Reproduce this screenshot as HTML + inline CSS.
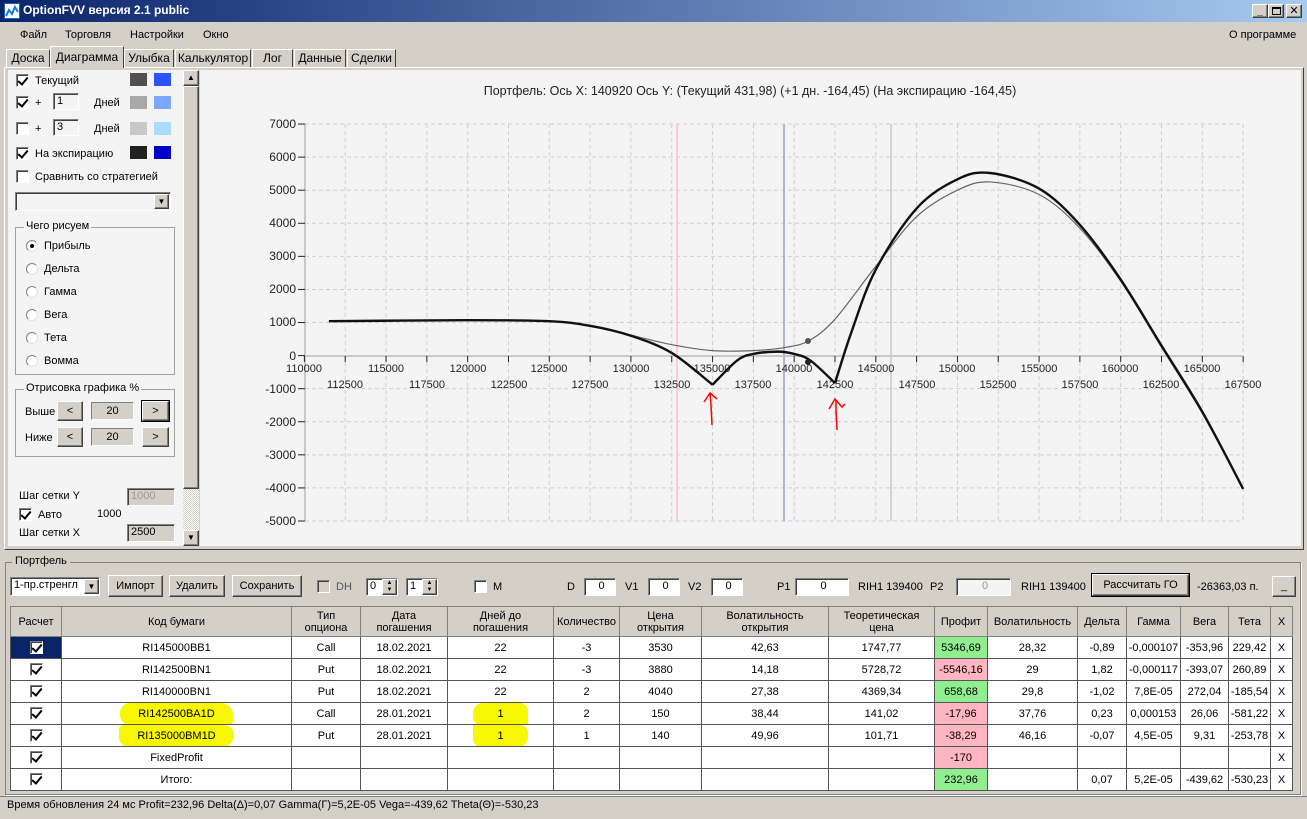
<!DOCTYPE html>
<html><head><meta charset="utf-8"><style>
*{box-sizing:border-box;margin:0;padding:0}
body{width:1307px;height:819px;overflow:hidden;background:#d4d0c8;font:11px "Liberation Sans","DejaVu Sans",sans-serif;color:#000;position:relative}
.a{position:absolute}
.cb{position:absolute;width:13px;height:13px;background:#fff;border:1px solid #808080;border-right-color:#fff;border-bottom-color:#fff;box-shadow:inset 1px 1px 0 #404040}
.cb.c::after{content:"";position:absolute;left:3px;top:0px;width:4px;height:8px;border:solid #000;border-width:0 2px 2px 0;transform:rotate(40deg)}
.cb.d{background:#d4d0c8}
.sw{position:absolute;width:17px;height:13px}
.inp{position:absolute;background:#f4f4f4;border:1px solid #808080;border-right-color:#fff;border-bottom-color:#fff;box-shadow:inset 1px 1px 0 #404040;padding-left:3px;line-height:14px}
.btn{position:absolute;background:#d4d0c8;border:1px solid #fff;border-right-color:#404040;border-bottom-color:#404040;box-shadow:inset -1px -1px 0 #808080;text-align:center}
.rd{position:absolute;width:12px;height:12px;border-radius:50%;background:#fff;border:1px solid #808080;border-right-color:#e0e0e0;border-bottom-color:#e0e0e0}
.gb{position:absolute;border:1px solid #a0a0a0}
.gl{position:absolute;background:#f4f4f4;padding:0 2px}
.tab{position:absolute;top:49px;height:18px;border:1px solid #fff;border-right-color:#404040;border-bottom:none;background:#d4d0c8;text-align:center;line-height:16px;font-size:12px}
table{border-collapse:collapse;table-layout:fixed;position:absolute;left:10px;top:606px;width:1282px;background:#fff;font-size:11px;font-family:"Liberation Sans Narrow","Liberation Sans",sans-serif}
td{border:1px solid #555;text-align:center;height:22px;padding:0;white-space:nowrap;overflow:hidden}
tr.h td{background:#d4d0c8;height:30px;line-height:12px;border-color:#808080}
td .cb{position:relative;display:inline-block;vertical-align:middle}
.g{background:#90ee90}.r{background:#ffb6c1}
</style></head><body>
<div class="a" style="left:0;top:0;width:1307px;height:22px;background:linear-gradient(90deg,#0a246a,#a6caf0)"></div>
<div class="a" style="left:4px;top:3px;width:16px;height:16px;background:#fff;border:1px solid #2060c0"><svg width="14" height="14"><path d="M1 12 L4 6 L7 10 L10 3 L13 8" stroke="#1a7ad8" stroke-width="2" fill="none"/></svg></div>
<div class="a" style="left:23px;top:3px;color:#fff;font-weight:bold;font-size:12px">OptionFVV версия 2.1 public</div>
<div class="btn" style="left:1252px;top:4px;width:16px;height:14px;font-size:10px;line-height:14px;font-weight:bold">_</div>
<div class="btn" style="left:1268px;top:4px;width:16px;height:14px"><div class="a" style="left:3px;top:2px;width:9px;height:8px;border:1px solid #000;border-top-width:2px"></div></div>
<div class="btn" style="left:1286px;top:4px;width:16px;height:14px;font-size:11px;line-height:12px;font-weight:bold">✕</div>
<div class="a" style="left:0;top:22px;width:1307px;height:24px;background:#d4d0c8"></div>
<div class="a" style="left:20px;top:29px">Файл</div>
<div class="a" style="left:65px;top:29px">Торговля</div>
<div class="a" style="left:130px;top:29px">Настройки</div>
<div class="a" style="left:203px;top:29px">Окно</div>
<div class="a" style="left:1229px;top:29px">О программе</div>
<div class="tab" style="left:6px;width:44px">Доска</div>
<div class="tab" style="left:50px;top:46px;height:22px;width:74px;line-height:20px;background:#d4d0c8;z-index:2">Диаграмма</div>
<div class="tab" style="left:124px;width:50px">Улыбка</div>
<div class="tab" style="left:175px;width:76px">Калькулятор</div>
<div class="tab" style="left:252px;width:41px">Лог</div>
<div class="tab" style="left:294px;width:52px">Данные</div>
<div class="tab" style="left:347px;width:49px">Сделки</div>
<div class="a" style="left:4px;top:67px;width:1300px;height:483px;border:1px solid #fff;border-right-color:#404040;border-bottom-color:#404040;background:#d4d0c8"></div>
<div class="a" style="left:8px;top:70px;width:175px;height:476px;background:#f4f4f4"></div>
<div class="cb c" style="left:16px;top:74px"></div><div class="a" style="left:35px;top:75px">Текущий</div>
<div class="sw" style="left:130px;top:73px;background:#505050"></div><div class="sw" style="left:154px;top:73px;background:#2b54ff"></div>
<div class="cb c" style="left:16px;top:96px"></div><div class="a" style="left:35px;top:97px">+</div><div class="inp" style="left:53px;top:93px;width:26px;height:17px">1</div><div class="a" style="left:94px;top:97px">Дней</div>
<div class="sw" style="left:130px;top:96px;background:#a8a8a8"></div><div class="sw" style="left:154px;top:96px;background:#7ba7ff"></div>
<div class="cb" style="left:16px;top:122px"></div><div class="a" style="left:35px;top:123px">+</div><div class="inp" style="left:53px;top:119px;width:26px;height:17px">3</div><div class="a" style="left:94px;top:123px">Дней</div>
<div class="sw" style="left:130px;top:122px;background:#c8c8c8"></div><div class="sw" style="left:154px;top:122px;background:#aadcff"></div>
<div class="cb c" style="left:16px;top:147px"></div><div class="a" style="left:35px;top:148px">На экспирацию</div>
<div class="sw" style="left:130px;top:146px;background:#202020"></div><div class="sw" style="left:154px;top:146px;background:#0000c8"></div>
<div class="cb" style="left:16px;top:170px"></div><div class="a" style="left:35px;top:171px">Сравнить со стратегией</div>
<div class="inp" style="left:15px;top:192px;width:156px;height:19px"></div><div class="btn" style="left:154px;top:194px;width:15px;height:15px;font-size:8px;line-height:13px">▼</div>
<div class="gb" style="left:15px;top:227px;width:160px;height:148px"></div><div class="gl" style="left:24px;top:220px">Чего рисуем</div>
<div class="rd" style="left:26px;top:240px"><div class="a" style="left:3px;top:3px;width:4px;height:4px;background:#000;border-radius:50%"></div></div><div class="a" style="left:44px;top:240px">Прибыль</div>
<div class="rd" style="left:26px;top:263px"></div><div class="a" style="left:44px;top:263px">Дельта</div>
<div class="rd" style="left:26px;top:286px"></div><div class="a" style="left:44px;top:286px">Гамма</div>
<div class="rd" style="left:26px;top:309px"></div><div class="a" style="left:44px;top:309px">Вега</div>
<div class="rd" style="left:26px;top:332px"></div><div class="a" style="left:44px;top:332px">Тета</div>
<div class="rd" style="left:26px;top:355px"></div><div class="a" style="left:44px;top:355px">Вомма</div>
<div class="gb" style="left:15px;top:389px;width:160px;height:68px"></div><div class="gl" style="left:24px;top:382px">Отрисовка графика %</div>
<div class="a" style="left:25px;top:406px">Выше</div><div class="btn" style="left:57px;top:401px;width:26px;height:20px;line-height:18px">&lt;</div><div class="a" style="left:91px;top:402px;width:43px;height:18px;border:1px solid #808080;border-right-color:#fff;border-bottom-color:#fff;background:#d4d0c8;text-align:center;line-height:16px">20</div><div class="btn" style="left:142px;top:401px;width:27px;height:20px;line-height:18px;outline:1px solid #000">&gt;</div>
<div class="a" style="left:25px;top:432px">Ниже</div><div class="btn" style="left:57px;top:427px;width:26px;height:20px;line-height:18px">&lt;</div><div class="a" style="left:91px;top:428px;width:43px;height:18px;border:1px solid #808080;border-right-color:#fff;border-bottom-color:#fff;background:#d4d0c8;text-align:center;line-height:16px">20</div><div class="btn" style="left:142px;top:427px;width:27px;height:20px;line-height:18px">&gt;</div>
<div class="a" style="left:19px;top:490px">Шаг сетки Y</div><div class="inp" style="left:127px;top:488px;width:48px;height:18px;background:#d4d0c8;color:#999">1000</div>
<div class="cb c" style="left:19px;top:508px"></div><div class="a" style="left:38px;top:509px">Авто</div><div class="a" style="left:97px;top:508px">1000</div>
<div class="a" style="left:19px;top:527px">Шаг сетки X</div><div class="inp" style="left:127px;top:524px;width:48px;height:18px;background:#d4d0c8">2500</div>
<div class="a" style="left:183px;top:70px;width:16px;height:476px;background:repeating-conic-gradient(#d4d0c8 0 25%,#fff 0 50%) 0 0/2px 2px"></div>
<div class="btn" style="left:183px;top:70px;width:16px;height:16px;font-size:8px;line-height:14px">▲</div>
<div class="btn" style="left:183px;top:86px;width:16px;height:403px"></div>
<div class="btn" style="left:183px;top:530px;width:16px;height:16px;font-size:8px;line-height:14px">▼</div>
<svg class="a" style="left:200px;top:70px" width="1101" height="476" viewBox="200 70 1101 476" font-family="Liberation Sans,sans-serif" font-size="12">
<rect x="200" y="70" width="1101" height="476" fill="#f4f4f4"/>
<text x="750" y="95" text-anchor="middle" font-size="12.5" fill="#222">Портфель: Ось X: 140920 Ось Y:  (Текущий 431,98)  (+1 дн. -164,45)  (На экспирацию -164,45)</text>
<g id="grid" stroke="#d0d0d0" stroke-dasharray="4 3" stroke-width="1"></g>
<line x1="677" y1="124" x2="677" y2="521" stroke="#ffc0c8" stroke-width="1.5"/>
<line x1="784" y1="124" x2="784" y2="521" stroke="#9aa4b8" stroke-width="1.5"/>
<line x1="891" y1="124" x2="891" y2="521" stroke="#c8c8c8" stroke-width="1.5"/>
<line x1="305" y1="124" x2="305" y2="521" stroke="#c8c8c8" stroke-width="2"/>
<line x1="305" y1="356" x2="1242" y2="356" stroke="#c8c8c8" stroke-width="2"/>
<g id="ticks" stroke="#222"></g>
<g text-anchor="end" fill="#222">
<text x="296" y="128">7000</text><text x="296" y="161">6000</text><text x="296" y="194">5000</text><text x="296" y="227">4000</text><text x="296" y="260">3000</text><text x="296" y="293">2000</text><text x="296" y="326">1000</text><text x="296" y="360">0</text><text x="296" y="393">-1000</text><text x="296" y="426">-2000</text><text x="296" y="459">-3000</text><text x="296" y="492">-4000</text><text x="296" y="525">-5000</text>
</g>
<g text-anchor="middle" font-size="11" fill="#222">
<text x="304" y="372">110000</text><text x="386" y="372">115000</text><text x="468" y="372">120000</text><text x="549" y="372">125000</text><text x="631" y="372">130000</text><text x="712" y="372">135000</text><text x="794" y="372">140000</text><text x="876" y="372">145000</text><text x="957" y="372">150000</text><text x="1039" y="372">155000</text><text x="1120" y="372">160000</text><text x="1202" y="372">165000</text>
<text x="345" y="388">112500</text><text x="427" y="388">117500</text><text x="509" y="388">122500</text><text x="590" y="388">127500</text><text x="672" y="388">132500</text><text x="753" y="388">137500</text><text x="835" y="388">142500</text><text x="917" y="388">147500</text><text x="998" y="388">152500</text><text x="1080" y="388">157500</text><text x="1161" y="388">162500</text><text x="1243" y="388">167500</text>
</g>
<path id="thin" fill="none" stroke="#666" stroke-width="1.2"/>
<path id="thick" fill="none" stroke="#111" stroke-width="2.4"/>
<circle cx="808" cy="341" r="3" fill="#555"/><circle cx="808" cy="362" r="3" fill="#222"/>
<path d="M712 425 L711 405 L710 393 M704 402 L710 393 L717 399" fill="none" stroke="#f00" stroke-width="1.5"/>
<path d="M837 430 L836 410 L836 400 M829 409 L835 399 L842 407 L845 404" fill="none" stroke="#f00" stroke-width="1.5"/>
</svg>
<div class="gb" style="left:5px;top:562px;width:1296px;height:233px;border-color:#808080;box-shadow:1px 1px 0 #fff"></div>
<div class="a" style="left:12px;top:555px;background:#d4d0c8;padding:0 3px">Портфель</div>
<div class="inp" style="left:10px;top:577px;width:90px;height:19px;background:#fff">1-пр.стренгл</div><div class="btn" style="left:84px;top:579px;width:15px;height:15px;font-size:8px;line-height:13px">▼</div>
<div class="btn" style="left:108px;top:575px;width:55px;height:22px;line-height:20px">Импорт</div>
<div class="btn" style="left:169px;top:575px;width:56px;height:22px;line-height:20px">Удалить</div>
<div class="btn" style="left:232px;top:575px;width:70px;height:22px;line-height:20px">Сохранить</div>
<div class="cb d" style="left:317px;top:580px"></div><div class="a" style="left:336px;top:581px;color:#555">DH</div>
<div class="inp" style="left:366px;top:578px;width:32px;height:18px;background:#fff">0</div><div class="btn" style="left:382px;top:579px;width:15px;height:16px;font-size:6px;line-height:7px">▲<br>▼</div>
<div class="inp" style="left:406px;top:578px;width:32px;height:18px;background:#fff">1</div><div class="btn" style="left:422px;top:579px;width:15px;height:16px;font-size:6px;line-height:7px">▲<br>▼</div>
<div class="cb" style="left:474px;top:580px"></div><div class="a" style="left:493px;top:581px">M</div>
<div class="a" style="left:567px;top:581px">D</div><div class="inp" style="left:584px;top:578px;width:32px;height:18px;background:#fff;text-align:center">0</div>
<div class="a" style="left:625px;top:581px">V1</div><div class="inp" style="left:648px;top:578px;width:32px;height:18px;background:#fff;text-align:center">0</div>
<div class="a" style="left:688px;top:581px">V2</div><div class="inp" style="left:711px;top:578px;width:32px;height:18px;background:#fff;text-align:center">0</div>
<div class="a" style="left:777px;top:581px">P1</div><div class="inp" style="left:795px;top:578px;width:54px;height:18px;background:#fff;text-align:center">0</div>
<div class="a" style="left:858px;top:581px">RIH1 139400</div><div class="a" style="left:930px;top:581px">P2</div>
<div class="inp" style="left:956px;top:578px;width:55px;height:18px;background:#f4f4f4;color:#999;text-align:center">0</div>
<div class="a" style="left:1021px;top:581px">RIH1 139400</div>
<div class="btn" style="left:1092px;top:574px;width:97px;height:22px;line-height:20px;outline:1px solid #000">Рассчитать ГО</div>
<div class="a" style="left:1197px;top:581px">-26363,03 п.</div>
<div class="btn" style="left:1272px;top:576px;width:24px;height:21px;line-height:18px">_</div>
<table>
<colgroup><col style="width:51px"><col style="width:230px"><col style="width:69px"><col style="width:87px"><col style="width:106px"><col style="width:66px"><col style="width:82px"><col style="width:127px"><col style="width:106px"><col style="width:53px"><col style="width:90px"><col style="width:49px"><col style="width:54px"><col style="width:48px"><col style="width:42px"><col style="width:22px"></colgroup>
<tr class="h"><td>Расчет</td><td>Код бумаги</td><td>Тип<br>опциона</td><td>Дата<br>погашения</td><td>Дней до<br>погашения</td><td>Количество</td><td>Цена<br>открытия</td><td>Волатильность<br>открытия</td><td>Теоретическая<br>цена</td><td>Профит</td><td>Волатильность</td><td>Дельта</td><td>Гамма</td><td>Вега</td><td>Тета</td><td>X</td></tr>
<tr><td style="background:#0a246a"><span class="cb c"></span></td><td>RI145000BB1</td><td>Call</td><td>18.02.2021</td><td>22</td><td>-3</td><td>3530</td><td>42,63</td><td>1747,77</td><td class="g">5346,69</td><td>28,32</td><td>-0,89</td><td>-0,000107</td><td>-353,96</td><td>229,42</td><td>X</td></tr>
<tr><td><span class="cb c"></span></td><td>RI142500BN1</td><td>Put</td><td>18.02.2021</td><td>22</td><td>-3</td><td>3880</td><td>14,18</td><td>5728,72</td><td class="r">-5546,16</td><td>29</td><td>1,82</td><td>-0,000117</td><td>-393,07</td><td>260,89</td><td>X</td></tr>
<tr><td><span class="cb c"></span></td><td>RI140000BN1</td><td>Put</td><td>18.02.2021</td><td>22</td><td>2</td><td>4040</td><td>27,38</td><td>4369,34</td><td class="g">658,68</td><td>29,8</td><td>-1,02</td><td>7,8E-05</td><td>272,04</td><td>-185,54</td><td>X</td></tr>
<tr><td><span class="cb c"></span></td><td><span style="background:#f7f700;padding:5px 18px;border-radius:10px 12px 4px 10px">RI142500BA1D</span></td><td>Call</td><td>28.01.2021</td><td><span style="background:#f7f700;padding:5px 24px;border-radius:10px 8px 0 8px">1</span></td><td>2</td><td>150</td><td>38,44</td><td>141,02</td><td class="r">-17,96</td><td>37,76</td><td>0,23</td><td>0,000153</td><td>26,06</td><td>-581,22</td><td>X</td></tr>
<tr><td><span class="cb c"></span></td><td><span style="background:#f7f700;padding:5px 18px;border-radius:4px 10px 12px 10px">RI135000BM1D</span></td><td>Put</td><td>28.01.2021</td><td><span style="background:#f7f700;padding:5px 24px;border-radius:0 8px 10px 8px">1</span></td><td>1</td><td>140</td><td>49,96</td><td>101,71</td><td class="r">-38,29</td><td>46,16</td><td>-0,07</td><td>4,5E-05</td><td>9,31</td><td>-253,78</td><td>X</td></tr>
<tr><td><span class="cb c"></span></td><td>FixedProfit</td><td></td><td></td><td></td><td></td><td></td><td></td><td></td><td class="r">-170</td><td></td><td></td><td></td><td></td><td></td><td>X</td></tr>
<tr><td><span class="cb c"></span></td><td>Итого:</td><td></td><td></td><td></td><td></td><td></td><td></td><td></td><td class="g">232,96</td><td></td><td>0,07</td><td>5,2E-05</td><td>-439,62</td><td>-530,23</td><td>X</td></tr>
</table>
<div class="a" style="left:0;top:796px;width:1307px;height:23px;border-top:1px solid #808080;background:#d4d0c8"></div>
<div class="a" style="left:7px;top:799px">Время обновления 24 мс  Profit=232,96 Delta(Δ)=0,07 Gamma(Γ)=5,2E-05 Vega=-439,62 Theta(Θ)=-530,23</div>
<script>
var X=v=>304.4+(v-110000)*0.016326, Y=p=>355.6-p*0.03308, ns="http://www.w3.org/2000/svg";
var g=document.getElementById('grid'),t=document.getElementById('ticks');
function L(p,a,b,c,d){var l=document.createElementNS(ns,'line');l.setAttribute('x1',a);l.setAttribute('y1',b);l.setAttribute('x2',c);l.setAttribute('y2',d);p.appendChild(l);}
for(var p=7000;p>=-5000;p-=1000){L(g,305,Y(p),1242,Y(p));L(t,298,Y(p),305,Y(p));}
for(var v=110000;v<=167500;v+=2500){L(g,X(v),124,X(v),521);L(t,X(v),356,X(v),362);}
function path(pts){var q=pts.map(a=>[X(a[0]),Y(a[1])]),d="M"+q[0][0]+" "+q[0][1];
for(var i=0;i<q.length-1;i++){var p0=q[Math.max(0,i-1)],p1=q[i],p2=q[i+1],p3=q[Math.min(q.length-1,i+2)];
d+=" C"+(p1[0]+(p2[0]-p0[0])/6)+" "+(p1[1]+(p2[1]-p0[1])/6)+" "+(p2[0]-(p3[0]-p1[0])/6)+" "+(p2[1]-(p3[1]-p1[1])/6)+" "+p2[0]+" "+p2[1];}return d;}
var thick=[[111500,1040],[120000,1070],[125000,1040],[127500,900],[130000,600],[132500,80],[135000,-880],[136500,-150],[137500,50],[139000,120],[140000,50],[141000,-150],[142500,-830],[143500,700],[145000,2600],[147500,4450],[150000,5330],[152000,5520],[155000,5050],[157500,3950],[160000,2300],[162500,300],[165000,-1700],[167500,-4030]];
var thin=[[111500,1040],[120000,1070],[125000,1040],[127500,900],[130000,620],[132500,330],[135000,150],[137500,150],[139500,250],[140900,450],[142500,1100],[145000,2700],[147500,4200],[150000,5000],[152000,5250],[155000,4870],[157500,3850],[160000,2250],[162500,250],[165000,-1750],[167500,-4030]];
function seg(a){var parts=[],cur=[a[0]];for(var i=1;i<a.length;i++){cur.push(a[i]);if(a[i][2]){parts.push(cur);cur=[a[i]];}}parts.push(cur);return parts.map(p=>p.length>1?path(p):"").join(" ");}
thick[6][2]=1;thick[12][2]=1;
document.getElementById('thick').setAttribute('d',seg(thick));
document.getElementById('thin').setAttribute('d',path(thin));
</script>
</body></html>
